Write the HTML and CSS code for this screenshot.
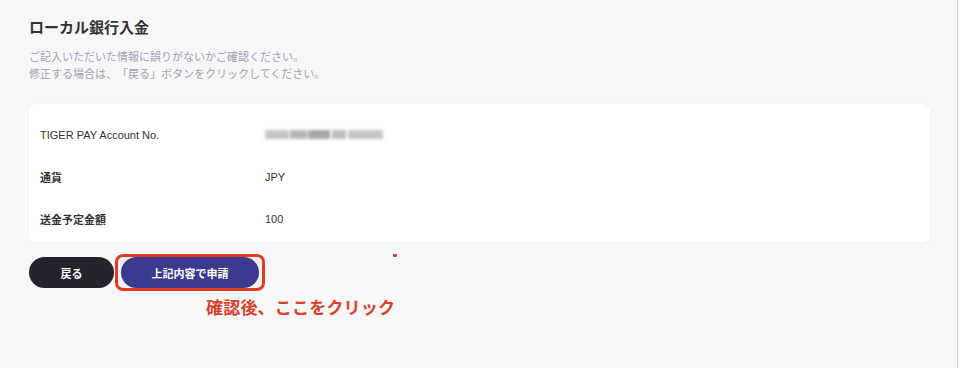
FILE: index.html
```html
<!DOCTYPE html>
<html lang="ja">
<head>
    <meta charset="UTF-8">
    <title>ローカル銀行入金</title>
    <link rel="stylesheet" href="styles.css">
</head>
<body>

<div class="screen">
    <div class="deposit">
        <h1 class="deposit__title">ローカル銀行入金</h1>
        <p class="deposit__note">
            ご記入いただいた情報に誤りがないかご確認ください。<br>
            修正する場合は、「戻る」ボタンをクリックしてください。
        </p>

        <div class="deposit__card">
            <div class="deposit__row">
                <div class="deposit__label">TIGER PAY Account No.</div>
                <div class="deposit__value">
                    <span class="blur">
                        <i class="b1"></i><i class="b2"></i><i class="b3"></i><i class="b4"></i><i class="b5"></i>
                    </span>
                </div>
            </div>
            <div class="deposit__row">
                <div class="deposit__label deposit__label--jp">通貨</div>
                <div class="deposit__value">JPY</div>
            </div>
            <div class="deposit__row">
                <div class="deposit__label deposit__label--jp">送金予定金額</div>
                <div class="deposit__value">100</div>
            </div>
        </div>

        <div class="deposit__actions">
            <button class="btn btn--back">戻る</button>
            <div class="highlight">
                <button class="btn btn--submit">上記内容で申請</button>
            </div>
            <span class="dot"></span>
        </div>
        <p class="callout">確認後、ここをクリック</p>
    </div>
</div>

</body>
</html>
```

FILE: styles.css
```css
*{
    box-sizing: border-box;
    margin:0;
    padding:0;
}
html, body{
    background:#ffffff;
}
body{
    font-family: "Liberation Sans", "Noto Sans CJK JP", sans-serif;
    color:#333;
    text-spacing-trim: space-all;
}
.screen{
    width:958px;
    height:368px;
    background:#f7f7f8;
    border-right:1px solid #c9c9cb;
    overflow:hidden;
}
.deposit{
    position:relative;
    width:930px;
    padding:18px 0 0 29px;
}
.deposit__title{
    font-size:15px;
    line-height:20px;
    font-weight:bold;
    color:#333;
}
.deposit__note{
    margin-top:11px;
    font-size:11px;
    line-height:17px;
    color:#9ea2b3;
}
.deposit__card{
    margin-top:21px;
    height:138px;
    background:#fff;
    border-radius:7px;
    box-shadow:0 0 3px rgba(0,0,0,0.04);
    padding:10px 0 2px 11px;
}
.deposit__row{
    display:flex;
    align-items:center;
    height:42px;
    font-size:11px;
}
.deposit__label{
    width:225px;
    color:#333;
}
.deposit__label--jp{
    font-weight:600;
}
.deposit__value{
    color:#333;
}
.blur{
    display:flex;
    width:118px;
    height:10px;
    filter:blur(1.8px);
}
.blur i{
    display:block;
    height:9px;
}
.blur .b1{ width:24px; background:#c4c4c7; }
.blur .b2{ width:18px; background:#b5b5b9; margin-left:1px; }
.blur .b3{ width:22px; background:#a6a6aa; margin-left:1px; }
.blur .b4{ width:14px; background:#bdbdc0; margin-left:2px; }
.blur .b5{ width:36px; background:#c6c6c9; margin-left:2px; }

.deposit__actions{
    position:relative;
    display:flex;
    align-items:center;
    margin-top:12px;
}
.btn{
    border:none;
    font-family:inherit;
    font-size:11px;
    font-weight:bold;
    color:#fff;
    height:31px;
    border-radius:16px;
}
.btn--back{
    width:85px;
    background:#23242d;
    margin-right:1px;
}
.highlight{
    border:3px solid #e33a22;
    border-radius:8px;
    padding:0 3px 0 3px;
    background:#f3f3f6;
    height:37px;
    display:flex;
    align-items:center;
}
.btn--submit{
    width:138px;
    background:#3c3a8f;
}
.dot{
    position:absolute;
    left:364px;
    top:0;
    width:4px;
    height:3px;
    border-radius:1px;
    background:#e33a22;
}
.callout{
    margin:7px 0 0 177px;
    font-size:17px;
    line-height:22px;
    font-weight:bold;
    color:#d9402a;
    letter-spacing:0.2px;
}
```
